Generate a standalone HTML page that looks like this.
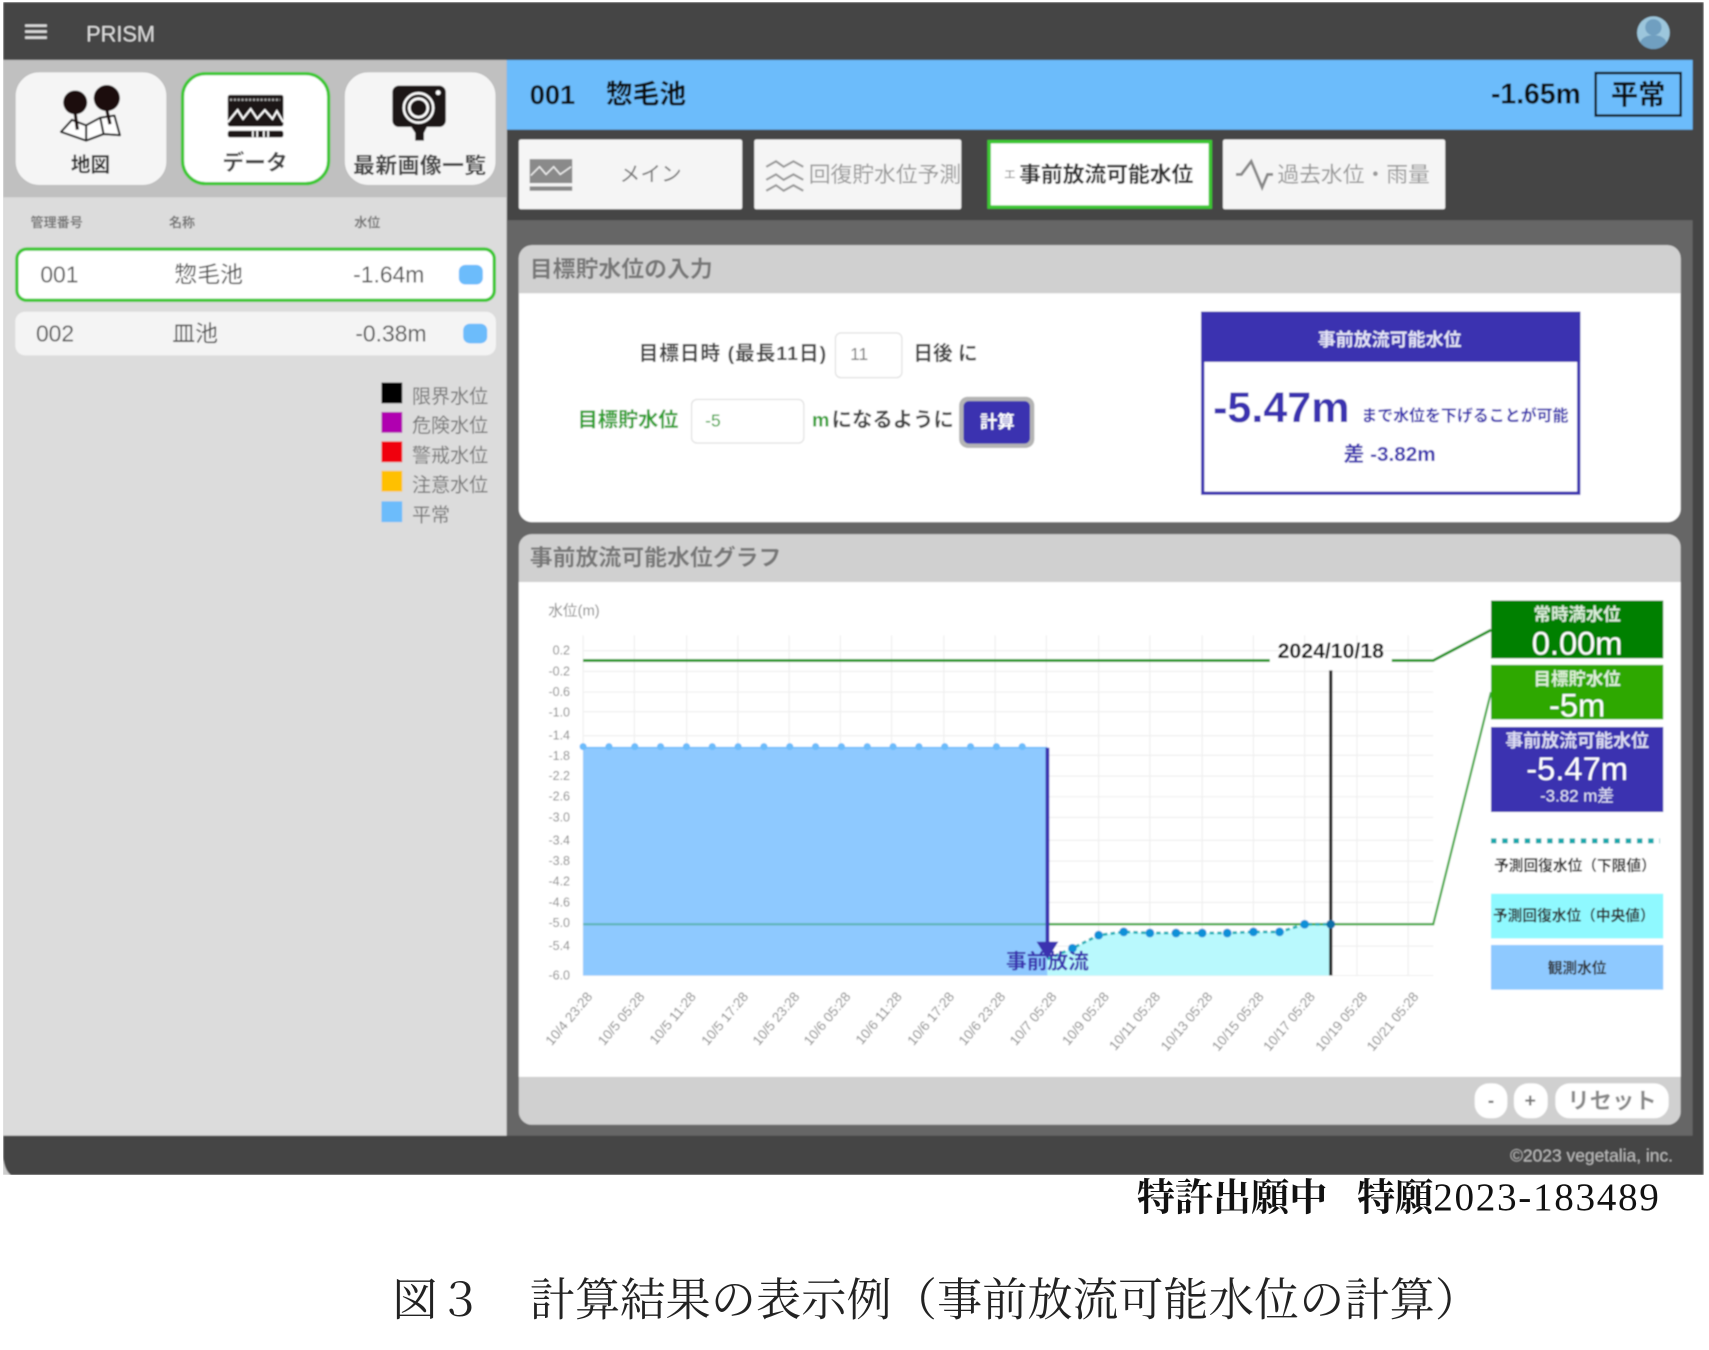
<!DOCTYPE html>
<html lang="ja"><head><meta charset="utf-8"><title>PRISM</title>
<style>
html,body{margin:0;padding:0;background:#fff;width:1709px;height:1350px;overflow:hidden}
svg{display:block}
text{dominant-baseline:central;font-family:"Liberation Sans","Noto Sans CJK JP",sans-serif}
.b{font-weight:700}
.m{text-anchor:middle}
.e{text-anchor:end}
.s{font-family:"Liberation Serif","Noto Serif CJK SC",serif}
</style></head><body>
<svg xmlns="http://www.w3.org/2000/svg" width="1709" height="1350" viewBox="0 0 1568 1238.6">
<defs><filter id="bl" x="0" y="0" width="100%" height="100%"><feGaussianBlur stdDeviation="0.7"/></filter></defs>
<rect width="1568" height="1239" fill="#fff"/>
<g filter="url(#bl)">
<!-- frame -->
<rect x="3" y="2" width="1560" height="1076" fill="#444"/>
<rect x="3" y="55" width="462" height="987" fill="#dcdcdc"/>
<rect x="3" y="55" width="462" height="126" fill="#c0c0c0"/>
<rect x="465" y="202" width="1088" height="840" fill="#666"/>
<rect x="465" y="55" width="1088" height="64" fill="#6cbcfb"/>
<path d="M3 1062C4 1070 6 1075 10 1078H3Z" fill="#ccc"/>
<!-- top bar -->
<path d="M23 23.5H43M23 29H43M23 34.5H43" stroke="#ddd" stroke-width="2.4"/>
<text x="79" y="31" font-size="20" fill="#ddd">PRISM</text>
<circle cx="1517" cy="30" r="15" fill="#9cc6dc"/>
<circle cx="1517" cy="25" r="7.5" fill="#6f9fc0"/>
<path d="M1505 39c2-9 22-9 24 0c-6 8-18 8-24 0z" fill="#6f9fc0"/>
<!-- nav cards -->
<rect x="14" y="66" width="139" height="104" rx="22" fill="#f5f5f5" stroke="#b5b5b5" stroke-width="0.6"/>
<rect x="167.5" y="67.5" width="134" height="101" rx="21" fill="#fff" stroke="#3cc832" stroke-width="3"/>
<rect x="316" y="66" width="139" height="104" rx="22" fill="#f5f5f5" stroke="#b5b5b5" stroke-width="0.6"/>
<!-- map icon -->
<path d="M56 121L66 110L79 115L92 108L105 106L110 124L95 123L79 129ZM79 115V129M92 108L95 123" fill="#fff" stroke="#222" stroke-width="2" stroke-linejoin="round"/>
<circle cx="69" cy="94" r="11" fill="#1b1111"/><circle cx="98" cy="90" r="12" fill="#1b1111"/>
<path d="M69 104L71 119M98 101L101 114" stroke="#1b1111" stroke-width="3"/>
<text x="83" y="152" font-size="18" class="b m" fill="#333">地図</text>
<!-- data icon -->
<rect x="209" y="87" width="51" height="29" rx="2" fill="#1a1212"/>
<path d="M211 91.5H257" stroke="#aaa" stroke-width="2" stroke-dasharray="2 1.5"/>
<path d="M209 112L218 101L223 109L230 100L236 109L243 101L250 109L254 102L260 112" fill="none" stroke="#fff" stroke-width="1.8"/>
<rect x="209" y="120" width="51" height="6" rx="2" fill="#1a1212"/>
<path d="M232 120v6M236 120v6M242 120v6M246 120v6" stroke="#fff" stroke-width="1.5"/>
<text x="234" y="149" font-size="20" class="b m" fill="#444">データ</text>
<!-- camera icon -->
<rect x="360" y="78.5" width="49" height="38" rx="6" fill="#1a1212"/>
<circle cx="384" cy="99" r="13.5" fill="none" stroke="#fff" stroke-width="2.2"/>
<circle cx="384" cy="99" r="8.5" fill="none" stroke="#fff" stroke-width="2.4"/>
<circle cx="402" cy="85" r="2.2" fill="#fff"/>
<path d="M377 116H392L389 122V129H381V122Z" fill="#1a1212"/>
<text x="385" y="152" font-size="20" class="b m" fill="#444" textLength="122">最新画像一覧</text>
<!-- list -->
<text x="28" y="204" font-size="12" class="b" fill="#777">管理番号</text>
<text x="155" y="204" font-size="12" class="b" fill="#777">名称</text>
<text x="325" y="204" font-size="12" class="b" fill="#777">水位</text>
<rect x="15.5" y="228.5" width="438" height="47" rx="9" fill="#fff" stroke="#3cc832" stroke-width="3"/>
<text x="37" y="252" font-size="21" fill="#555">001</text>
<text x="160" y="252" font-size="21" fill="#555">惣毛池</text>
<text x="324" y="252" font-size="21" fill="#555">-1.64m</text>
<rect x="421" y="243" width="22" height="18" rx="6" fill="#6cbcfb"/>
<rect x="14" y="286" width="441" height="40" rx="9" fill="#f4f4f4"/>
<text x="33" y="306" font-size="21" fill="#555">002</text>
<text x="158" y="306" font-size="21" fill="#555">皿池</text>
<text x="326" y="306" font-size="21" fill="#555">-0.38m</text>
<rect x="425" y="297" width="22" height="18" rx="6" fill="#6cbcfb"/>
<!-- legend -->
<rect x="350" y="351" width="19" height="19" fill="#000"/>
<rect x="350" y="378" width="19" height="19" fill="#b000b0"/>
<rect x="350" y="405" width="19" height="19" fill="#f00010"/>
<rect x="350" y="432" width="19" height="19" fill="#ffc000"/>
<rect x="350" y="460" width="19" height="19" fill="#6cbcfb"/>
<text x="378" y="364.500" font-size="17.5" fill="#777">限界水位</text>
<text x="378" y="391.500" font-size="17.5" fill="#777">危険水位</text>
<text x="378" y="419" font-size="17.5" fill="#777">警戒水位</text>
<text x="378" y="446" font-size="17.5" fill="#777">注意水位</text>
<text x="378" y="473.500" font-size="17.5" fill="#777">平常</text>
<!-- title bar -->
<text x="486" y="86.500" font-size="25" class="b" fill="#111">001</text>
<text x="556" y="86.500" font-size="24.500" class="b" fill="#111">惣毛池</text>
<text x="1368" y="86.500" font-size="26" class="b" fill="#111">-1.65m</text>
<rect x="1464" y="67" width="78" height="39" fill="none" stroke="#111" stroke-width="2.2"/>
<text x="1503" y="86.500" font-size="25" class="b m" fill="#111">平常</text>
<!-- tabs -->
<rect x="476" y="128" width="205" height="64" rx="2" fill="#f5f5f5"/>
<rect x="692" y="128" width="190" height="64" rx="2" fill="#f5f5f5"/>
<rect x="907.500" y="130" width="203" height="60" fill="#fff" stroke="#3cc832" stroke-width="3.2"/>
<rect x="1122" y="128" width="204" height="64" rx="2" fill="#f5f5f5"/>
<rect x="486" y="146" width="39" height="22" fill="#8a8a8a"/>
<path d="M487 161L495 153L501 160L508 153L514 160L524 153" fill="none" stroke="#eee" stroke-width="1.4"/>
<rect x="486" y="171" width="39" height="4" fill="#8a8a8a"/>
<text x="597" y="160" font-size="19" class="m" fill="#777">メイン</text>
<path d="M703 153l9-5 7 5 9-5 9 5M703 165l9-5 7 5 9-5 9 5M703 175l9-5 7 5 9-5 9 5" fill="none" stroke="#999" stroke-width="2"/>
<text x="742" y="160" font-size="20" fill="#999">回復貯水位予測</text>
<text x="921" y="160" font-size="11" fill="#888">エ</text>
<text x="935" y="160" font-size="20" class="b" fill="#333">事前放流可能水位</text>
<path d="M1134 160L1139 160L1148 148L1158 172L1163 160L1168 160" fill="none" stroke="#888" stroke-width="2.6"/>
<text x="1172" y="160" font-size="20" fill="#999">過去水位・雨量</text>
<!-- card 1 -->
<rect x="476" y="225" width="1066" height="254" rx="12" fill="#fff"/>
<path d="M476 269V237a12 12 0 0 1 12-12H1530a12 12 0 0 1 12 12V269Z" fill="#d0d0d0"/>
<text x="486" y="247" font-size="21" class="b" fill="#777">目標貯水位の入力</text>
<text x="586" y="325" font-size="18" class="b" fill="#444" textLength="172">目標日時 (最長11日)</text>
<rect x="766.500" y="305.500" width="61" height="41" rx="5" fill="#fff" stroke="#ddd"/>
<text x="780" y="325" font-size="16" fill="#777">11</text>
<text x="838" y="325" font-size="18" class="b" fill="#444">日後 に</text>
<text x="530" y="386" font-size="18.500" class="b" fill="#2aa02a">目標貯水位</text>
<rect x="634.500" y="366.500" width="103" height="40" rx="5" fill="#fff" stroke="#ddd"/>
<text x="647" y="386" font-size="16" fill="#2aa02a">-5</text>
<text x="745" y="386" font-size="18" class="b" fill="#2aa02a">m</text>
<text x="763" y="386" font-size="18.700" class="b" fill="#444">になるように</text>
<rect x="880" y="364" width="69" height="47" rx="8" fill="#b4b4b4"/>
<rect x="884" y="368" width="61" height="39" rx="5" fill="#3a32b0"/>
<text x="915" y="387" font-size="16" class="b m" fill="#fff">計算</text>
<rect x="1103.500" y="287.500" width="345" height="165" fill="#fff" stroke="#3a32b0" stroke-width="3"/>
<rect x="1102" y="286" width="348" height="46" fill="#3a32b0"/>
<text x="1275" y="312" font-size="16.500" class="b m" fill="#e4e4f6">事前放流可能水位</text>
<text x="1113" y="374.500" font-size="39.500" class="b" fill="#3a32b0">-5.47m</text>
<text x="1249" y="382" font-size="14.500" class="b" fill="#3a32b0" textLength="190">まで水位を下げることが可能</text>
<text x="1275" y="417" font-size="19" class="b m" fill="#3a32b0">差 -3.82m</text>
<!-- card 2 -->
<rect x="476" y="490" width="1066" height="542" rx="12" fill="#d0d0d0"/>
<rect x="476" y="534" width="1066" height="454" fill="#fff"/>
<text x="486" y="511.500" font-size="21" class="b" fill="#777">事前放流可能水位グラフ</text>
<text x="503" y="561" font-size="13.500" fill="#888">水位(m)</text>
<!-- grid -->
<path d="M535 583V895M582 583V895M630 583V895M677 583V895M724 583V895M771 583V895M818 583V895M866 583V895M913 583V895M960 583V895M1008 583V895M1055 583V895M1103 583V895M1150 583V895M1197 583V895M1245 583V895M1292 583V895M535 597H1315M535 616H1315M535 635H1315M535 653H1315M535 675H1315M535 693H1315M535 712H1315M535 731H1315M535 750H1315M535 771H1315M535 790H1315M535 809H1315M535 828H1315M535 847H1315M535 868H1315M535 895H1315" stroke="#eee" stroke-width="1" fill="none"/>
<g font-size="11.500" fill="#888">
<text x="523" y="597" class="e">0.2</text><text x="523" y="616" class="e">-0.2</text><text x="523" y="635" class="e">-0.6</text><text x="523" y="653.500" class="e">-1.0</text><text x="523" y="675" class="e">-1.4</text><text x="523" y="693.500" class="e">-1.8</text><text x="523" y="712" class="e">-2.2</text><text x="523" y="731" class="e">-2.6</text><text x="523" y="750" class="e">-3.0</text><text x="523" y="771" class="e">-3.4</text><text x="523" y="790" class="e">-3.8</text><text x="523" y="809" class="e">-4.2</text><text x="523" y="828" class="e">-4.6</text><text x="523" y="847" class="e">-5.0</text><text x="523" y="868" class="e">-5.4</text><text x="523" y="895" class="e">-6.0</text>
</g>
<!-- areas -->
<rect x="535" y="686" width="426" height="209" fill="#8ec9ff"/>
<path d="M961 880L984 870L1008 858L1031 855L1055 856L1079 856L1103 856L1126 856L1150 855L1174 855L1197 848L1221 848V895H961Z" fill="#b9f9fd"/>
<path d="M535 686H961" stroke="#6cbcfb" stroke-width="1.500"/>
<path d="M535 685H940" stroke="#6cbcfb" stroke-width="6.500" stroke-linecap="round" stroke-dasharray="0 23.7"/>
<path d="M535 606H1165M1277 606H1315L1368 578" fill="none" stroke="#149414" stroke-width="2.500"/>
<path d="M535 848H961" stroke="#5fb5b8" stroke-width="2"/>
<path d="M961 848H1315L1368 635" fill="none" stroke="#3aa83a" stroke-width="2"/>
<path d="M961 880L984 870L1008 858L1031 855L1055 856L1079 856L1103 856L1126 856L1150 855L1174 855L1197 848L1221 848" fill="none" stroke="#19b0b8" stroke-width="2.500" stroke-dasharray="4 3"/>
<g fill="#0a90d8"><circle cx="984" cy="870" r="4"/><circle cx="1008" cy="858" r="4"/><circle cx="1031" cy="855" r="4"/><circle cx="1055" cy="856" r="4"/><circle cx="1079" cy="856" r="4"/><circle cx="1103" cy="856" r="4"/><circle cx="1126" cy="856" r="4"/><circle cx="1150" cy="855" r="4"/><circle cx="1174" cy="855" r="4"/><circle cx="1197" cy="848" r="4"/></g>
<path d="M1221 615V895" stroke="#222" stroke-width="3"/>
<circle cx="1221" cy="848" r="4" fill="#0a70a8"/>
<text x="1221" y="597.500" font-size="19.500" class="b m" fill="#111">2024/10/18</text>
<path d="M961 686V868" stroke="#3a32b0" stroke-width="3.500"/>
<path d="M951 864H971L961 880Z" fill="#3a32b0"/>
<text x="961" y="882.500" font-size="19" class="b m" fill="#3a32b0">事前放流</text>
<!-- x labels -->
<g font-size="12.500" fill="#888">
<text class="e" transform="translate(541 912) rotate(-50)">10/4 23:28</text>
<text class="e" transform="translate(589 912) rotate(-50)">10/5 05:28</text>
<text class="e" transform="translate(636 912) rotate(-50)">10/5 11:28</text>
<text class="e" transform="translate(684 912) rotate(-50)">10/5 17:28</text>
<text class="e" transform="translate(731 912) rotate(-50)">10/5 23:28</text>
<text class="e" transform="translate(778 912) rotate(-50)">10/6 05:28</text>
<text class="e" transform="translate(825 912) rotate(-50)">10/6 11:28</text>
<text class="e" transform="translate(873 912) rotate(-50)">10/6 17:28</text>
<text class="e" transform="translate(920 912) rotate(-50)">10/6 23:28</text>
<text class="e" transform="translate(967 912) rotate(-50)">10/7 05:28</text>
<text class="e" transform="translate(1015 912) rotate(-50)">10/9 05:28</text>
<text class="e" transform="translate(1062 912) rotate(-50)">10/11 05:28</text>
<text class="e" transform="translate(1110 912) rotate(-50)">10/13 05:28</text>
<text class="e" transform="translate(1157 912) rotate(-50)">10/15 05:28</text>
<text class="e" transform="translate(1204 912) rotate(-50)">10/17 05:28</text>
<text class="e" transform="translate(1252 912) rotate(-50)">10/19 05:28</text>
<text class="e" transform="translate(1299 912) rotate(-50)">10/21 05:28</text>
</g>
<!-- right legend -->
<rect x="1368" y="551" width="158" height="53" fill="#008000"/>
<text x="1447" y="564" font-size="16" class="b m" fill="#d8ecd8">常時満水位</text>
<text x="1447" y="590" font-size="30" class="m" fill="#fff">0.00m</text>
<rect x="1368" y="610" width="158" height="50" fill="#2fa800"/>
<text x="1447" y="623" font-size="16" class="b m" fill="#def0d8">目標貯水位</text>
<text x="1447" y="647" font-size="30" class="m" fill="#fff">-5m</text>
<rect x="1368" y="667" width="158" height="78" fill="#3a32b0"/>
<text x="1447" y="680" font-size="16.500" class="b m" fill="#dcdcf2">事前放流可能水位</text>
<text x="1447" y="705" font-size="30" class="m" fill="#fff">-5.47m</text>
<text x="1447" y="730.500" font-size="15.500" class="m" fill="#e4e4f6">-3.82 m差</text>
<path d="M1368 771.500H1523" stroke="#12a8ac" stroke-width="4.500" stroke-dasharray="5 5.300"/>
<text x="1445" y="795" font-size="13.500" class="b m" fill="#333">予測回復水位（下限値）</text>
<rect x="1368" y="820" width="158" height="41" fill="#8ff9ff"/>
<text x="1444" y="841" font-size="13.500" class="b m" fill="#333">予測回復水位（中央値）</text>
<rect x="1368" y="867" width="158" height="41" fill="#8ec9ff"/>
<text x="1447" y="889" font-size="13.500" class="b m" fill="#333">観測水位</text>
<!-- zoom buttons -->
<rect x="1353" y="994" width="30" height="32" rx="13" fill="#fff"/>
<rect x="1389" y="994" width="31" height="32" rx="13" fill="#fff"/>
<rect x="1427" y="994" width="104" height="32" rx="13" fill="#fff"/>
<text x="1368" y="1010" font-size="18" class="b m" fill="#777">-</text>
<text x="1404" y="1010" font-size="18" class="b m" fill="#777">+</text>
<text x="1479" y="1010" font-size="20.500" class="b m" fill="#888">リセット</text>
<!-- footer text -->
<text x="1535" y="1060" font-size="16" class="e" fill="#bbb">©2023 vegetalia, inc.</text>
</g>
<!-- caption -->
<text x="1043" y="1099.500" font-size="35" class="s b" fill="#111">特許出願中</text>
<text x="1245" y="1099.500" font-size="35" class="s b" fill="#111">特願</text>
<text x="1315" y="1098.500" font-size="36" class="s" fill="#111" textLength="207">2023-183489</text>
<text x="360" y="1193" font-size="41.500" class="s" fill="#222">図３</text>
<text x="486" y="1193" font-size="41.500" class="s" fill="#222" textLength="872">計算結果の表示例（事前放流可能水位の計算）</text>
</svg>
</body></html>
